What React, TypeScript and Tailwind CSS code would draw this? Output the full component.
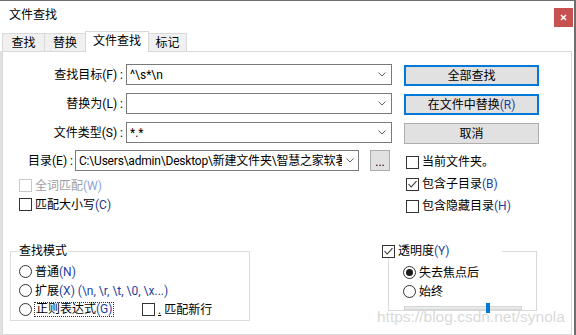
import React from "react";

function Chevron() {
  return (
    <svg width="8" height="5" viewBox="0 0 8 5" className="shrink-0">
      <polyline points="0.5,0.5 4,4 7.5,0.5" fill="none" stroke="#5f5f5f" strokeWidth="1" />
    </svg>
  );
}

function Check({ checked = false, disabled = false }: { checked?: boolean; disabled?: boolean }) {
  return (
    <span
      className={
        disabled
          ? "w-[13px] h-[13px] border border-[#c8c8c8] bg-white flex items-center justify-center shrink-0"
          : "w-[13px] h-[13px] border border-[#333333] bg-white flex items-center justify-center shrink-0"
      }
    >
      {checked && (
        <svg width="11" height="11" viewBox="0 0 11 11">
          <polyline points="1.5,5 4.2,8 9.5,2.2" fill="none" stroke="#333333" strokeWidth="1.1" />
        </svg>
      )}
    </span>
  );
}

function Radio({ on = false }: { on?: boolean }) {
  return (
    <span className="w-[13px] h-[13px] rounded-full border border-[#333333] bg-white flex items-center justify-center shrink-0">
      {on && <span className="w-[7px] h-[7px] rounded-full bg-[#1a1a1a]" />}
    </span>
  );
}

export default function App() {
  return (
    <div className="w-[576px] h-[335px] bg-white overflow-hidden relative flex flex-col border-t border-r-2 border-[#6e6e6e] text-[12px] leading-[14px] text-black font-['Roboto','Noto_Sans_CJK_SC',sans-serif]">
      {/* title bar */}
      <div className="h-[30px] flex items-start shrink-0">
        <div className="ml-[9px] mt-[7px] leading-[15px]">文件查找</div>
        <div className="ml-auto mt-[7px] mr-px w-[19px] h-[19px] bg-[#c75050] flex items-center justify-center">
          <svg width="7" height="7" viewBox="0 0 7 7">
            <path d="M1 1 L6 6 M6 1 L1 6" stroke="white" strokeWidth="1.6" />
          </svg>
        </div>
      </div>

      {/* tabs */}
      <div className="h-[21px] -mb-px relative z-10 flex items-end pl-[2px] shrink-0">
        <div className="h-[19px] w-[43px] border border-[#d9d9d9] bg-[#f0f0f0] flex items-center justify-center">查找</div>
        <div className="h-[19px] w-[42px] -ml-px border border-[#d9d9d9] bg-[#f0f0f0] flex items-center justify-center">替换</div>
        <div className="h-[21px] w-[64px] -ml-px relative z-10 border-t border-l border-r border-[#d9d9d9] bg-white flex items-center justify-center pb-[2px]">文件查找</div>
        <div className="h-[19px] w-[39px] -ml-px border border-[#d9d9d9] bg-[#f0f0f0] flex items-center justify-center">标记</div>
      </div>

      {/* panel */}
      <div className="flex h-[284px] shrink-0">
        <div className="w-[2px] bg-[#e1e1e1]" />
        <div className="w-[570px] h-[284px] border border-[#d9d9d9] flex flex-col">
          {/* section 1 */}
          <div className="flex items-start pt-[12px]">
            <div className="flex flex-col gap-[8px]">
              <div className="flex items-center h-[21px]">
                <div className="w-[120px] text-right whitespace-nowrap">查找目标(F) :</div>
                <div className="ml-[3px] w-[266px] h-[21px] border border-[#7a7a7a] flex items-center pl-[3px] pr-[5px]">
                  <span className="flex-1 whitespace-nowrap">^\s*\n</span>
                  <Chevron />
                </div>
              </div>
              <div className="flex items-center h-[21px]">
                <div className="w-[120px] text-right whitespace-nowrap">替换为(L) :</div>
                <div className="ml-[3px] w-[266px] h-[21px] border border-[#7a7a7a] flex items-center pl-[3px] pr-[5px]">
                  <span className="flex-1" />
                  <Chevron />
                </div>
              </div>
              <div className="flex items-center h-[21px]">
                <div className="w-[120px] text-right whitespace-nowrap">文件类型(S) :</div>
                <div className="ml-[3px] w-[266px] h-[21px] border border-[#7a7a7a] flex items-center pl-[3px] pr-[5px]">
                  <span className="flex-1">*.*</span>
                  <Chevron />
                </div>
              </div>
            </div>
            <div className="ml-[12px] mt-px flex flex-col gap-[8px]">
              <div className="w-[135px] h-[21px] border-2 border-[#0078d7] bg-[#e1e1e1] flex items-center justify-center">全部查找</div>
              <div className="w-[135px] h-[21px] border-2 border-[#0078d7] bg-[#e1e1e1] flex items-center justify-center">
                在文件中替换<span className="text-[#1f3fa0]">(R)</span>
              </div>
              <div className="w-[135px] h-[21px] border border-[#adadad] bg-[#e1e1e1] flex items-center justify-center">取消</div>
            </div>
          </div>

          {/* section 2 */}
          <div className="flex items-start">
            <div className="w-[401px] flex flex-col">
              <div className="mt-[6px] h-[21px] flex items-center">
                <div className="w-[70px] text-right whitespace-nowrap">目录(E) :</div>
                <div className="ml-[2px] w-[284px] h-[21px] border border-[#7a7a7a] flex items-center pl-[3px] pr-[4px]">
                  <span className="flex-1 whitespace-nowrap overflow-hidden mr-[4px] tracking-[-0.2px]">C:\Users\admin\Desktop\新建文件夹\智慧之家软著目录</span>
                  <Chevron />
                </div>
                <div className="ml-[11px] w-[20px] h-[21px] border border-[#adadad] bg-[#e1e1e1] flex items-center justify-center pt-[3px] leading-[12px]">...</div>
              </div>
              <div className="mt-[5px] h-[19px] pl-[16px] flex items-center gap-[3px] text-[#a0a0a0]">
                <Check disabled />
                <span>
                  全词匹配<span className="text-[#8aa4d6]">(W)</span>
                </span>
              </div>
              <div className="h-[19px] pl-[16px] flex items-center gap-[3px]">
                <Check />
                <span>
                  匹配大小写<span className="text-[#1f3a80]">(C)</span>
                </span>
              </div>
            </div>
            <div className="pt-[7px] pl-[2px] flex flex-col">
              <div className="h-[22px] flex items-center gap-[3px]">
                <Check />
                <span>当前文件夹。</span>
              </div>
              <div className="h-[22px] flex items-center gap-[3px]">
                <Check checked />
                <span>
                  包含子目录<span className="text-[#1f3fa0]">(B)</span>
                </span>
              </div>
              <div className="h-[22px] flex items-center gap-[3px]">
                <Check />
                <span>
                  包含隐藏目录<span className="text-[#1f3fa0]">(H)</span>
                </span>
              </div>
            </div>
          </div>

          {/* section 3 */}
          <div className="flex items-start mt-[34px]">
            <div className="ml-[7px] relative w-[240px] h-[70px] border border-[#dcdcdc]">
              <div className="absolute left-[7px] top-[-8px] px-px bg-white leading-[14px]">查找模式</div>
              <div className="pt-[10px] pl-[8px] flex flex-col">
                <div className="h-[19px] flex items-center gap-[3px]">
                  <Radio />
                  <span>
                    普通<span className="text-[#1f3fa0]">(N)</span>
                  </span>
                </div>
                <div className="h-[19px] flex items-center gap-[3px]">
                  <Radio />
                  <span className="whitespace-nowrap">
                    扩展<span className="text-[#1f3fa0]">(X) (\n, \r, \t, \0, \x...)</span>
                  </span>
                </div>
                <div className="h-[19px] flex items-center">
                  <div className="w-[123px] flex items-center gap-[2px]">
                    <Radio />
                    <span className="border border-dotted border-[#333333] px-px leading-[13px]">
                      正则表达式<span className="text-[#1f3fa0]">(G)</span>
                    </span>
                  </div>
                  <Check />
                  <span className="ml-[3px] whitespace-nowrap">
                    <span className="underline">.</span> 匹配新行
                  </span>
                </div>
              </div>
            </div>

            <div className="ml-[138px] relative w-[149px] h-[60px] border border-[#d9d9d9]">
              <div className="absolute left-[-7px] top-[-8px] w-[120px] h-[14px] bg-white flex items-center gap-[3px]">
                <Check checked />
                <span>
                  透明度<span className="text-[#1f3fa0]">(Y)</span>
                </span>
              </div>
              <div className="pt-[11px] pl-[14px] flex flex-col">
                <div className="h-[19px] flex items-center gap-[3px]">
                  <Radio on />
                  <span>失去焦点后</span>
                </div>
                <div className="h-[19px] flex items-center gap-[3px]">
                  <Radio />
                  <span>始终</span>
                </div>
                <div className="mt-[5px] ml-px w-[118px] h-[4px] relative bg-[#e7eaea] border border-[#d6d6d6]">
                  <div className="absolute left-[81px] top-[-4px] w-[4px] h-[10px] bg-[#0078d7]" />
                </div>
              </div>
            </div>
          </div>
        </div>
      </div>

      {/* watermark */}
      <div className="absolute left-[377px] top-[307px] text-[15.5px] leading-[18px] text-[#d9d9d9] font-['Liberation_Sans',Arial,sans-serif] pointer-events-none">
        https://blog.csdn.net/synola
      </div>
    </div>
  );
}
